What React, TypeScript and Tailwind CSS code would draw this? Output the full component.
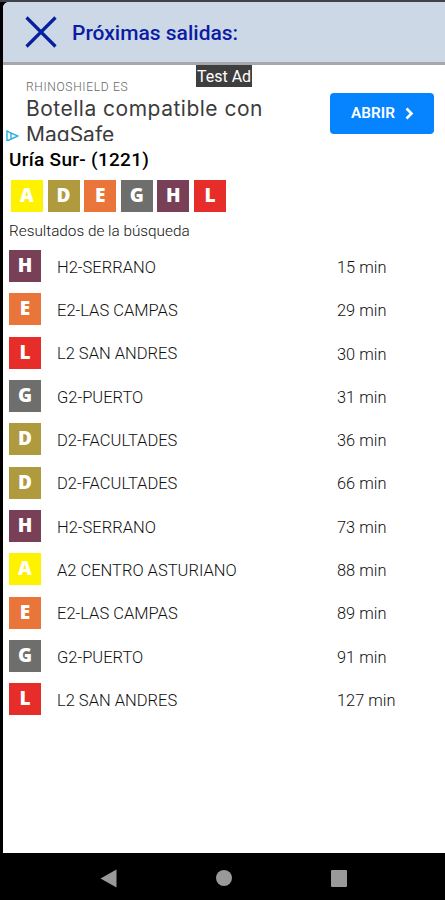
type Line = "A" | "D" | "E" | "G" | "H" | "L";

const lineColors: Record<Line, string> = {
  A: "bg-[#fff200]",
  D: "bg-[#b09a3e]",
  E: "bg-[#ea753b]",
  G: "bg-[#6e6e6c]",
  H: "bg-[#783f57]",
  L: "bg-[#e62d2a]",
};

const stopLines: Line[] = ["A", "D", "E", "G", "H", "L"];

const departures: { line: Line; name: string; time: string }[] = [
  { line: "H", name: "H2-SERRANO", time: "15 min" },
  { line: "E", name: "E2-LAS CAMPAS", time: "29 min" },
  { line: "L", name: "L2 SAN ANDRES", time: "30 min" },
  { line: "G", name: "G2-PUERTO", time: "31 min" },
  { line: "D", name: "D2-FACULTADES", time: "36 min" },
  { line: "D", name: "D2-FACULTADES", time: "66 min" },
  { line: "H", name: "H2-SERRANO", time: "73 min" },
  { line: "A", name: "A2 CENTRO ASTURIANO", time: "88 min" },
  { line: "E", name: "E2-LAS CAMPAS", time: "89 min" },
  { line: "G", name: "G2-PUERTO", time: "91 min" },
  { line: "L", name: "L2 SAN ANDRES", time: "127 min" },
];

function Badge({ line }: { line: Line }) {
  return (
    <span
      className={`flex h-8 w-8 shrink-0 items-center justify-center pb-px font-['Open_Sans',sans-serif] text-[19px] leading-none font-extrabold text-white ${lineColors[line]}`}
    >
      {line}
    </span>
  );
}

function Header() {
  return (
    <header className="flex h-[63px] shrink-0 items-center rounded-tl-md border-b-3 border-[#a5a7aa] bg-[#cdd8e6] pl-[22px]">
      <svg width="32" height="32" viewBox="0 0 32 32" fill="none" stroke="#0720a0" strokeWidth="3.2">
        <path d="M1.5 1.5 30.5 30.5M30.5 1.5 1.5 30.5" />
      </svg>
      <h1 className="ml-[15px] pt-[2px] text-[21px] leading-none font-medium whitespace-nowrap text-[#0b1ca5]">
        Próximas salidas:
      </h1>
    </header>
  );
}

function Ad() {
  return (
    <section className="relative flex h-[76px] shrink-0 overflow-hidden">
      <div className="ml-[23px] w-[304px] pt-[15px]">
        <p className="text-[12px] leading-[14px] font-light tracking-[0.68px] text-[#666]">RHINOSHIELD ES</p>
        <p className="mt-[2px] font-[Inter,sans-serif] text-[21px] leading-[26px] tracking-[0.5px] whitespace-nowrap text-[#3c3c3c]">
          Botella compatible con
          <br />
          <span className="tracking-normal">MagSafe</span>
        </p>
      </div>
      <button className="mt-[28px] flex h-[41px] w-[104px] items-center justify-center gap-[10px] rounded-[4px] bg-[#0684ff] pl-px text-[15.3px] font-semibold text-white">
        ABRIR
        <svg width="9" height="13" viewBox="0 0 9 13" fill="none" stroke="currentColor" strokeWidth="2.6">
          <path d="m1.5 1.5 5 5-5 5" />
        </svg>
      </button>
      <span className="absolute top-0 left-[193px] flex h-[22px] w-[56px] items-center justify-center bg-[#3e3e3e] pt-[2px] text-[16px] whitespace-nowrap text-white">
        Test Ad
      </span>
      <svg className="absolute top-[65px] left-[3px]" width="13" height="12" viewBox="0 0 13 12" fill="none" stroke="#26b0dc" strokeWidth="1.4">
        <path d="M5.5 3.6 1 1v10l11-5-7-3v5.5" />
      </svg>
    </section>
  );
}

export default function App() {
  return (
    <div className="flex h-[900px] w-[445px] flex-col overflow-hidden bg-black font-[Roboto,sans-serif]">
      <div className="h-[2px] shrink-0 bg-[#3d4349]" />
      <div className="ml-[3px] flex h-[851px] flex-col rounded-tl-md bg-white">
        <Header />
        <Ad />
        <main className="flex flex-col pl-[6px]">
          <h2 className="mt-[7px] text-[19px] leading-[24px] font-medium tracking-[0.3px] text-black">Uría Sur- (1221)</h2>
          <div className="mt-[7.5px] ml-[2px] flex gap-[4.6px]">
            {stopLines.map((line) => (
              <Badge key={line} line={line} />
            ))}
          </div>
          <p className="mt-[9px] text-[15.3px] leading-[20px] font-light text-[#111]">Resultados de la búsqueda</p>
          <ul className="mt-[4px]">
            {departures.map((d, i) => (
              <li key={i} className="flex h-[43.3px] items-center">
                <Badge line={d.line} />
                <span className="ml-[16px] w-[280px] pt-[4px] text-[16.5px] leading-none font-light text-[#111]">{d.name}</span>
                <span className="pt-[4px] text-[16.4px] leading-none font-light text-[#111]">{d.time}</span>
              </li>
            ))}
          </ul>
        </main>
      </div>
      <nav className="flex h-[47px] items-center pt-[3px] pl-[100px]">
        <svg width="17" height="19" viewBox="0 0 17 19" fill="#999">
          <path d="M16.5.5v18L.5 9.5z" />
        </svg>
        <span className="ml-[99px] h-4 w-4 rounded-full bg-[#999]" />
        <span className="ml-[99px] h-[17px] w-4 rounded-[1px] bg-[#999]" />
      </nav>
    </div>
  );
}
